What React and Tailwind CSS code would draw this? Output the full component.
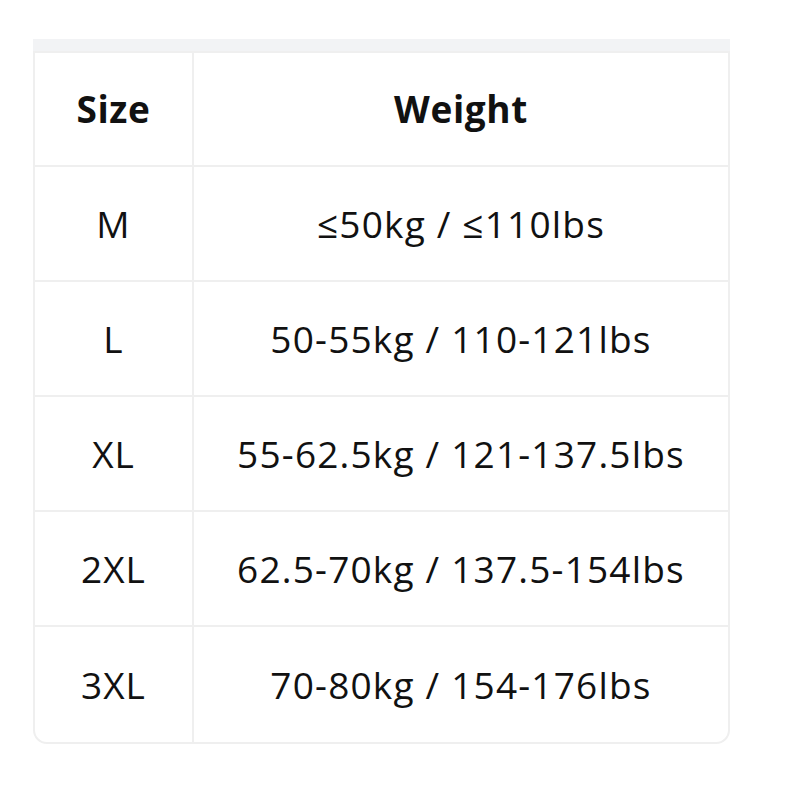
import React from "react";

const rows = [
  ["M", "≤50kg / ≤110lbs"],
  ["L", "50-55kg / 110-121lbs"],
  ["XL", "55-62.5kg / 121-137.5lbs"],
  ["2XL", "62.5-70kg / 137.5-154lbs"],
  ["3XL", "70-80kg / 154-176lbs"],
];

export default function App() {
  return (
    <div className="w-[800px] h-[800px] bg-white pt-[39px] pl-[33px]" style={{ fontFamily: '"Open Sans", "Noto Sans", sans-serif' }}>
      <div className="w-[697px]">
        <div className="h-[12px] bg-[#f2f3f5]" />
        <div className="border-2 border-[#efefef] rounded-b-[14px] overflow-hidden text-[#111]">
          <div className="grid grid-cols-[159px_1fr] h-[114px] items-center border-b-2 border-[#efefef]">
            <div className="h-full flex items-center justify-center border-r-2 border-[#efefef] text-[37px] font-bold tracking-[0.6px]">Size</div>
            <div className="h-full flex items-center justify-center text-[37px] font-bold tracking-[0.6px]">Weight</div>
          </div>
          {rows.map(([s, w], i) => (
            <div key={s} className={`grid grid-cols-[159px_1fr] h-[115px] ${i < rows.length - 1 ? "border-b-2 border-[#efefef]" : ""}`}>
              <div className="h-full flex items-center justify-center border-r-2 border-[#efefef] text-[37px] tracking-[1px]">{s}</div>
              <div className="h-full flex items-center justify-center text-[37px] tracking-[1.2px]">{w}</div>
            </div>
          ))}
        </div>
      </div>
    </div>
  );
}
